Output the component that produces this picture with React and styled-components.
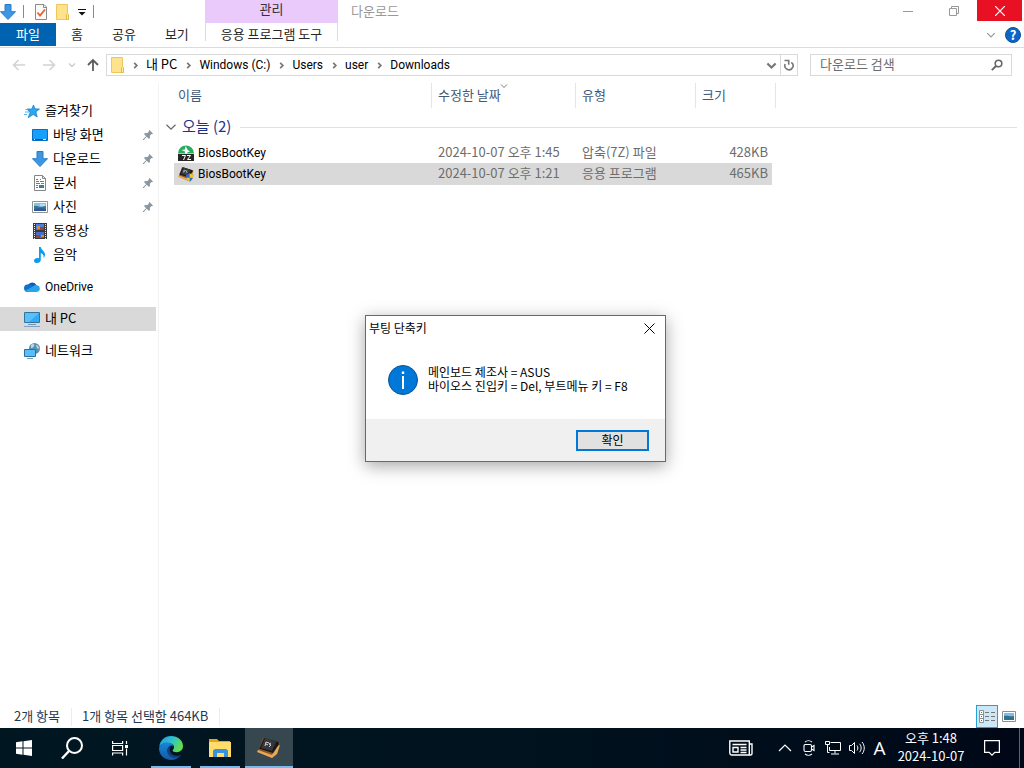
import React from 'react';
import styled, { createGlobalStyle } from 'styled-components';

const GlobalStyle = createGlobalStyle`
  *, *::before, *::after {
    box-sizing: border-box;
  }
  body {
    margin: 0;
    background: #fff;
    color: #000;
    font-family: 'Noto Sans CJK KR', 'Noto Sans', sans-serif;
    font-size: 13px;
    line-height: 16px;
  }
  button, input {
    font: inherit;
    color: inherit;
    border: 0;
    padding: 0;
    margin: 0;
    background: none;
  }
  a {
    color: inherit;
    text-decoration: none;
  }
  svg {
    display: block;
    flex: none;
  }
`;

const Desktop = styled.div`
  position: relative;
  display: flex;
  flex-direction: column;
  min-height: 100vh;
`;

const ExplorerWindow = styled.main`
  flex: 1;
  display: flex;
  flex-direction: column;
  background: #fff;
`;

const ItemText = styled.span`
  padding-bottom: 2px;
  ${({ $latin }) => $latin && "font-family: Roboto, 'Noto Sans', sans-serif; font-size: 12px; padding-bottom: 0;"}
`;

const isLatin = (text) => /^[\x20-\x7e]+$/.test(text);

/* icons */

const DownArrowIcon = ({ size = 16 }) => (
  <svg width={size} height={size} viewBox="0 0 16 16" aria-hidden="true">
    <path d="M5 .5h6v7.2h4.5L8 15.5.5 7.7H5z" fill="#3b97e3" stroke="#2c7cc4" />
  </svg>
);

const PropertiesIcon = () => (
  <svg width="12" height="16" viewBox="0 0 12 16" aria-hidden="true">
    <path d="M.5.5H9l2.5 2.5v12.5H.5z" fill="#fafafa" stroke="#8b8b8b" />
    <path d="M8.5.5V3.500h3" fill="none" stroke="#8b8b8b" />
    <path d="M2.500 8.500l2.500 3 5-6" fill="none" stroke="#e8622c" strokeWidth="1.800" />
  </svg>
);

const FolderIcon = () => (
  <svg width="13" height="16" viewBox="0 0 13 16" aria-hidden="true">
    <path d="M.5.5h11v9l1 1v5H.5z" fill="#ffe28c" stroke="#edc75a" />
    <path d="M10.500 15.500v-5l1-1 1 1v5z" fill="#ffe9a6" stroke="#e3b94a" />
  </svg>
);

const CustomizeIcon = () => (
  <svg width="8" height="8" viewBox="0 0 8 8" aria-hidden="true">
    <path d="M0 1.500h8" stroke="#111" />
    <path d="M.5 4h7L4 7.500z" fill="#111" />
  </svg>
);

const Chevron = ({ dir = 'right', size = 8, color = '#666', weight = 1.4 }) => {
  const d = {
    right: 'M2.500 1l3 3-3 3',
    down: 'M1 2.500l3 3 3-3',
    up: 'M1 5.500l3-3 3 3',
  }[dir];
  return (
    <svg width={size} height={size} viewBox="0 0 8 8" aria-hidden="true">
      <path d={d} fill="none" stroke={color} strokeWidth={weight} />
    </svg>
  );
};

const NavArrow = ({ dir, color }) => {
  const d = {
    left: 'M13 7H2M6.500 2L1.500 7l5 5',
    right: 'M1 7h11M7.500 2l5 5-5 5',
    up: 'M7 13V2M2 7l5-5 5 5',
  }[dir];
  return (
    <svg width="14" height="14" viewBox="0 0 14 14" aria-hidden="true">
      <path d={d} fill="none" stroke={color} strokeWidth={dir === 'up' ? 1.8 : 1.5} />
    </svg>
  );
};

const RefreshIcon = () => (
  <svg width="12" height="12" viewBox="0 0 12 12" aria-hidden="true">
    <path d="M8.300 3.300A4.100 4.100 0 1 1 2.200 5" fill="none" stroke="#777" strokeWidth="1.600" />
    <path d="M1.500 1.500h4.200v4.200" fill="none" stroke="#777" strokeWidth="1.600" />
  </svg>
);

const SearchIcon = () => (
  <svg width="12" height="12" viewBox="0 0 12 12" aria-hidden="true">
    <circle cx="7.500" cy="4.500" r="3.300" fill="none" stroke="#666" strokeWidth="1.600" />
    <path d="M5 7L.8 11.200" stroke="#666" strokeWidth="1.900" />
  </svg>
);

const StarIcon = () => (
  <svg width="16" height="16" viewBox="0 0 16 16" aria-hidden="true">
    <path
      d="M9.500 2l1.400 3.800 4.600.3-3.600 2.700 1.300 5.200-4-2.500-5 3.300 1.900-5.400L3 6h4.800z"
      fill="#2da5f0"
      stroke="#1584cc"
      strokeWidth=".8"
    />
    <path d="M1 9h4M0 11.500h3M1.500 6.500h2" stroke="#5bb8f2" />
  </svg>
);

const DesktopIcon = () => (
  <svg width="16" height="16" viewBox="0 0 16 16" aria-hidden="true">
    <path d="M.5 2.500h15v11H.5z" fill="#16a0fd" stroke="#0f6cbd" />
    <path d="M1 12.500h14" stroke="#0b4f94" />
    <path d="M2 12.500h1M11 12.500h3" stroke="#fff" />
  </svg>
);

const DocumentIcon = () => (
  <svg width="16" height="16" viewBox="0 0 16 16" aria-hidden="true">
    <path d="M2.500.5h8l3 3v12h-11z" fill="#fff" stroke="#868686" />
    <path d="M10.500.5v3h3" fill="none" stroke="#868686" />
    <path d="M4 4.500h2M8 4.500h1M4 6.500h3M8 6.500h4M4 8.500h4M9 8.500h3M4 10.500h2M4 12.500h2" stroke="#2b8fd6" />
    <path d="M7 10h5v3H7z" fill="#3a7f96" />
  </svg>
);

const PictureIcon = () => (
  <svg width="16" height="16" viewBox="0 0 16 16" aria-hidden="true">
    <path d="M.5 2.500h15v11H.5z" fill="#fff" stroke="#929292" />
    <path d="M2 4h12v8H2z" fill="#86c1ef" />
    <path d="M2 7c3-1 5 1 7 1s3-1 5-1v5H2z" fill="#397889" />
    <path d="M2 10c4-1 8-1 12 0v2H2z" fill="#2e579b" />
    <path d="M8 6h5" stroke="#e9f6ff" />
  </svg>
);

const VideoIcon = () => (
  <svg width="16" height="16" viewBox="0 0 16 16" aria-hidden="true">
    <path d="M1 0h14v16H1z" fill="#3a3a3a" />
    <path d="M2.500 1v15M13.500 1v15" stroke="#eee" strokeDasharray="1 1" />
    <path d="M4 1h8v6H4z" fill="#4e7ddb" />
    <path d="M4 9h8v6H4z" fill="#456fc9" />
    <path d="M5 3h3v3H5zM9 12h3v2H9z" fill="#dc8a2d" />
    <path d="M8 4h4v3H8zM4 12h4v3H4z" fill="#9b4141" />
  </svg>
);

const MusicIcon = () => (
  <svg width="16" height="16" viewBox="0 0 16 16" aria-hidden="true">
    <path
      d="M7 0h1.800c.2 3 4.200 4 4.200 7.500 0 1.500-.6 2.500-1.500 3.500.6-2.600-.6-4.400-2.700-4.800v6.500c0 2-1.700 3.300-3.800 3.300-1.700 0-3-.9-3-2.300C2 12 3.800 11 5.400 11c.6 0 1.100.1 1.600.3z"
      fill="#0c9bf3"
    />
  </svg>
);

const OneDriveIcon = () => (
  <svg width="16" height="16" viewBox="0 0 16 16" aria-hidden="true">
    <path d="M4 6a4.700 4.700 0 0 1 8.500.3L9 10z" fill="#0a5cb5" />
    <path d="M3.500 5.600c2-.6 4 0 5.500 1.500l2 4.400-7 1.500A3.700 3.700 0 0 1 3.500 5.600z" fill="#1270cd" />
    <path d="M9 7.500c1.200-1.500 3-1.700 4.200-1.200A3.400 3.400 0 0 1 12.800 13H3.600c-1 0-1.900-.5-2.500-1.200z" fill="#29a3ea" />
  </svg>
);

const PcIcon = () => (
  <svg width="16" height="16" viewBox="0 0 16 16" aria-hidden="true">
    <path d="M.5 1.500h15v10H.5z" fill="#58c1fc" stroke="#35739c" />
    <path d="M15 2v9H5z" fill="#34a9f5" />
    <path d="M4 13.500h8" stroke="#7695ad" />
    <path d="M0 15.500h16" stroke="#7ba3c6" />
  </svg>
);

const NetworkIcon = () => (
  <svg width="16" height="16" viewBox="0 0 16 16" aria-hidden="true">
    <circle cx="10.500" cy="5.500" r="5.500" fill="#5a91b0" />
    <path d="M7 2c2-2 4-1 3 1S7 5 7 5zM12 2c2 0 3 2 3 4l-2-1z" fill="#b9dbe8" />
    <path d="M.5 6.500h11v7H.5z" fill="#56c0fc" stroke="#2c6f9e" />
    <path d="M3 15.500h6" stroke="#7da0b8" />
  </svg>
);

const PinIcon = () => (
  <svg width="10" height="10" viewBox="0 0 10 10" aria-hidden="true">
    <path d="M6.500 0L10 3.500l-1 .7-.5-.2-1.700 1.800.2 2L6 9 3.800 6.700.8 10H0v-.8l3.200-3L1 4l1.200-1 2 .2L6 1.500l-.2-.6z" fill="#8a959d" />
  </svg>
);

const ArchiveIcon = () => (
  <svg width="16" height="16" viewBox="0 0 16 16" aria-hidden="true">
    <path d="M0 8.500a8 8 0 0 1 16 0z" fill="#29ab61" />
    <path d="M7.500 1l2 3.500 2.500 2.500H9.500V8.500H7V6.500L3.500 5l3.500-.5z" fill="#fff" />
    <path d="M0 9h16v7H0z" fill="#262626" />
    <path d="M4 10.500h3.500L5.500 15M9 10.500h3.500L9.500 14.500h3.500" fill="none" stroke="#fff" />
  </svg>
);

const KeyIcon = ({ size = 16, shield }) => (
  <svg width={size} height={size} viewBox="0 0 24 24" aria-hidden="true">
    <path d="M6 2l17 5-3 11-5 4L1 16l2-6z" fill="#8f5426" />
    <path d="M1 14l14 5 6-9 2-1-3 9-5 4L0 16z" fill="#e5a958" />
    <path d="M7 2l14 4c1 0 1 1 1 2l-6 9L3 13c-1 0-1-1 0-2z" fill="#17181b" />
    <path d="M8 2l11 4-4 9L4 12z" fill="#35373b" />
    <path d="M9 6l-1 4M9 6l3 1M9 8l2 1M14 7l-2 1 2 1-2 2" fill="none" stroke="#cfd1d4" />
    {shield && (
      <>
        <path d="M12 13c2 0 4-1 5.500-2 1.500 1 3 2 5.500 2 0 5-2 8-5.500 10.500C14 21 12 18 12 13z" fill="#2172c8" />
        <path d="M17.500 11c2 1 3 2 5.500 2v4.500h-5.500zM12.500 17.500h5v6C14.500 21.500 13 20 12.500 17.500z" fill="#ffc42b" />
      </>
    )}
  </svg>
);

const InfoIcon = () => (
  <svg width="30" height="30" viewBox="0 0 30 30" aria-hidden="true">
    <circle cx="15" cy="15" r="14.500" fill="#0078d7" stroke="#0a5296" />
    <path d="M15 11V24" stroke="#fff" strokeWidth="2" />
    <path d="M15 6.500V9" stroke="#fff" strokeWidth="2.400" />
  </svg>
);

/* title bar and ribbon */

const TitleBar = styled.header`
  display: flex;
  height: 23px;
`;

const QuickAccess = styled.div`
  display: flex;
  align-items: center;
  gap: 9px;
  flex: 0 0 205px;
`;

const QuickButton = styled.button`
  display: flex;
`;

const QuickDivider = styled.span`
  width: 1px;
  height: 13px;
  margin: 0 2px 0 -2px;
  background: #8a8a8a;
`;

const ContextLabel = styled.div`
  flex: 0 0 133px;
  padding-top: 1px;
  background: #eac9fb;
  color: #333;
  text-align: center;
`;

const WindowTitle = styled.div`
  flex: 1;
  padding: 3px 13px;
  color: #999;
`;

const WindowButtons = styled.div`
  display: flex;
  gap: 1px;
  margin-right: 2px;
`;

const WindowButton = styled.button`
  display: flex;
  align-items: center;
  justify-content: center;
  width: 45px;
  height: 21px;
  background: ${({ $close }) => ($close ? '#e81123' : 'transparent')};
`;

const Ribbon = styled.nav`
  display: flex;
  height: 25px;
  border-bottom: 1px solid #dadbdc;
`;

const RibbonTabs = styled.div`
  display: flex;
  gap: 1px;
  flex: 0 0 205px;
`;

const RibbonTab = styled.button`
  height: 23px;
  padding: 0 14px 1px;
  color: #262626;
`;

const FileTab = styled(RibbonTab)`
  width: 56px;
  background: #0063b1;
  color: #fff;
`;

const ContextTab = styled(RibbonTab)`
  flex: 0 0 133px;
  padding: 0 0 1px;
  border: solid #dcdcdc;
  border-width: 0 1px;
  height: 18px;
  line-height: 22px;
`;

const RibbonEnd = styled.div`
  display: flex;
  align-items: center;
  gap: 9px;
  margin-left: auto;
  padding-right: 3px;
`;

const HelpButton = styled.button`
  width: 16px;
  height: 16px;
  border: 1px solid #14508c;
  border-radius: 50%;
  background: #0a66c8;
  color: #fff;
  font-weight: 700;
  line-height: 12px;
`;

const TopBars = () => (
  <>
    <TitleBar>
      <QuickAccess>
        <DownArrowIcon />
        <QuickDivider />
        <QuickButton aria-label="속성"><PropertiesIcon /></QuickButton>
        <QuickButton aria-label="새 폴더"><FolderIcon /></QuickButton>
        <QuickButton aria-label="사용자 지정"><CustomizeIcon /></QuickButton>
        <QuickDivider />
      </QuickAccess>
      <ContextLabel>관리</ContextLabel>
      <WindowTitle>다운로드</WindowTitle>
      <WindowButtons>
        <WindowButton aria-label="최소화">
          <svg width="10" height="10"><path d="M0 5.500h10" stroke="#999" /></svg>
        </WindowButton>
        <WindowButton aria-label="이전 크기로">
          <svg width="10" height="10" fill="none" stroke="#999">
            <path d="M.5 2.500h7v7h-7zM2.500 2.500v-2h7v7h-2" />
          </svg>
        </WindowButton>
        <WindowButton $close aria-label="닫기">
          <svg width="10" height="10"><path d="M0 0l10 10M10 0L0 10" stroke="#fff" strokeWidth="1.200" /></svg>
        </WindowButton>
      </WindowButtons>
    </TitleBar>
    <Ribbon>
      <RibbonTabs>
        <FileTab>파일</FileTab>
        <RibbonTab>홈</RibbonTab>
        <RibbonTab>공유</RibbonTab>
        <RibbonTab>보기</RibbonTab>
      </RibbonTabs>
      <ContextTab>응용 프로그램 도구</ContextTab>
      <RibbonEnd>
        <QuickButton aria-label="리본 확장">
          <Chevron dir="down" size={10} color="#999" weight={1} />
        </QuickButton>
        <HelpButton aria-label="도움말">?</HelpButton>
      </RibbonEnd>
    </Ribbon>
  </>
);

/* address bar */

const AddressRow = styled.div`
  display: flex;
  align-items: center;
  height: 35px;
  padding: 0 12px 1px 4px;
`;

const NavButton = styled.button`
  display: flex;
  justify-content: center;
  width: ${({ $width }) => $width || 30}px;
`;

const AddressBox = styled.div`
  flex: 1;
  display: flex;
  height: 22px;
  border: 1px solid #d9d9d9;
`;

const Crumbs = styled.div`
  flex: 1;
  display: flex;
  align-items: center;
  padding-left: 4px;
`;

const CrumbArrow = styled.span`
  display: flex;
  justify-content: center;
  width: 22px;
`;

const AddressButton = styled.button`
  display: flex;
  align-items: center;
  justify-content: center;
  width: 17px;
  border-left: ${({ $divided }) => ($divided ? '1px solid #d9d9d9' : '0')};
`;

const SearchBox = styled.label`
  display: flex;
  align-items: center;
  flex: 0 0 202px;
  height: 22px;
  margin-left: 12px;
  padding: 0 8px 0 9px;
  border: 1px solid #d9d9d9;
`;

const SearchInput = styled.input`
  flex: 1;
  min-width: 0;
  height: 20px;
  padding-bottom: 3px;
  outline: 0;
  &::placeholder {
    color: #6d6d6d;
    opacity: 1;
  }
`;

const crumbs = ['내 PC', 'Windows (C:)', 'Users', 'user', 'Downloads'];

const AddressBar = () => (
  <AddressRow>
    <NavButton aria-label="뒤로"><NavArrow dir="left" color="#d2d2d2" /></NavButton>
    <NavButton aria-label="앞으로"><NavArrow dir="right" color="#d2d2d2" /></NavButton>
    <NavButton $width={16} aria-label="최근 위치"><Chevron dir="down" color="#ccc" /></NavButton>
    <NavButton $width={26} aria-label="위로"><NavArrow dir="up" color="#5c5c5c" /></NavButton>
    <AddressBox>
      <Crumbs>
        <FolderIcon />
        {crumbs.map((name) => (
          <React.Fragment key={name}>
            <CrumbArrow><Chevron size={7} weight={2} color="#777" /></CrumbArrow>
            <ItemText as="a" href="#path" $latin={isLatin(name)}>{name}</ItemText>
          </React.Fragment>
        ))}
      </Crumbs>
      <AddressButton aria-label="이전 위치"><Chevron dir="down" size={11} color="#777" weight={1.6} /></AddressButton>
      <AddressButton $divided aria-label="새로 고침"><RefreshIcon /></AddressButton>
    </AddressBox>
    <SearchBox>
      <SearchInput type="text" placeholder="다운로드 검색" aria-label="다운로드 검색" />
      <SearchIcon />
    </SearchBox>
  </AddressRow>
);

/* navigation pane */

const Content = styled.div`
  flex: 1;
  display: flex;
`;

const Sidebar = styled.nav`
  display: flex;
  flex-direction: column;
  gap: 8px;
  flex: 0 0 159px;
  padding: 16px 2px 0 0;
  border-right: 1px solid #f3f3f3;
`;

const SidebarGroup = styled.div`
  display: flex;
  flex-direction: column;
`;

const SidebarItem = styled.a`
  display: flex;
  align-items: center;
  gap: 5px;
  height: 24px;
  padding: 0 3px 0 ${({ $child }) => ($child ? 32 : 24)}px;
  background: ${({ $selected }) => ($selected ? '#d9d9d9' : 'transparent')};
`;

const SidebarLabel = styled(ItemText)`
  flex: 1;
`;

const sidebarGroups = [
  [
    { name: '즐겨찾기', icon: <StarIcon /> },
    { name: '바탕 화면', icon: <DesktopIcon />, child: true, pinned: true },
    { name: '다운로드', icon: <DownArrowIcon />, child: true, pinned: true },
    { name: '문서', icon: <DocumentIcon />, child: true, pinned: true },
    { name: '사진', icon: <PictureIcon />, child: true, pinned: true },
    { name: '동영상', icon: <VideoIcon />, child: true },
    { name: '음악', icon: <MusicIcon />, child: true },
  ],
  [{ name: 'OneDrive', icon: <OneDriveIcon /> }],
  [{ name: '내 PC', icon: <PcIcon />, selected: true }],
  [{ name: '네트워크', icon: <NetworkIcon /> }],
];

const NavigationPane = () => (
  <Sidebar>
    {sidebarGroups.map((group) => (
      <SidebarGroup key={group[0].name}>
        {group.map((item) => (
          <SidebarItem
            key={item.name}
            href="#place"
            $child={item.child}
            $selected={item.selected}
          >
            {item.icon}
            <SidebarLabel $latin={isLatin(item.name)}>{item.name}</SidebarLabel>
            {item.pinned && <PinIcon />}
          </SidebarItem>
        ))}
      </SidebarGroup>
    ))}
  </Sidebar>
);

/* file list */

const FilePane = styled.section`
  flex: 1;
  padding: 0 7px 0 6px;
`;

const FileTable = styled.table`
  width: 100%;
  table-layout: fixed;
  border-collapse: separate;
  border-spacing: 0;
`;

const HeadCell = styled.th`
  position: relative;
  height: 25px;
  padding: 0 0 2px ${({ $first }) => ($first ? 4 : 6)}px;
  border-right: 1px solid #e5e5e5;
  color: #43597a;
  font-weight: 400;
  text-align: left;
`;

const SortMark = styled.span`
  position: absolute;
  top: -1px;
  left: 68px;
`;

const GroupCell = styled.td`
  height: 34px;
  padding: 4px 0 0;
`;

const GroupHeader = styled.div`
  display: flex;
  align-items: center;
  gap: 5px;
  color: #1e3287;
  font-size: 15px;
`;

const GroupName = styled.span`
  padding-bottom: 2px;
`;

const GroupLine = styled.span`
  flex: 1;
  height: 1px;
  margin-left: 4px;
  background: #e2e2e2;
`;

const FileRow = styled.tr`
  td:not(:first-child):not(:last-child) {
    background: ${({ $selected }) => ($selected ? '#d9d9d9' : 'transparent')};
  }
`;

const FileCell = styled.td`
  height: ${({ $selected }) => ($selected ? 22 : 21)}px;
  padding: 0 4px 2px 6px;
  color: #6d6d6d;
  text-align: ${({ $right }) => ($right ? 'right' : 'left')};
`;

const NameCell = styled(FileCell)`
  padding: 0 0 0 4px;
  color: #000;
`;

const FileName = styled.span`
  display: flex;
  align-items: center;
  gap: 4px;
`;

const files = [
  {
    id: 1,
    name: 'BiosBootKey',
    icon: <ArchiveIcon />,
    date: '2024-10-07 오후 1:45',
    type: '압축(7Z) 파일',
    size: '428KB',
  },
  {
    id: 2,
    name: 'BiosBootKey',
    icon: <KeyIcon shield />,
    date: '2024-10-07 오후 1:21',
    type: '응용 프로그램',
    size: '465KB',
    selected: true,
  },
];

const FileList = () => (
  <FilePane>
    <FileTable>
      <colgroup>
        <col width="9" />
        <col width="258" />
        <col width="144" />
        <col width="120" />
        <col width="76" />
        <col width="4" />
        <col />
      </colgroup>
      <thead>
        <tr>
          <td />
          <HeadCell $first>이름</HeadCell>
          <HeadCell>
            수정한 날짜
            <SortMark><Chevron dir="down" color="#777" weight={1} /></SortMark>
          </HeadCell>
          <HeadCell>유형</HeadCell>
          <HeadCell colSpan={2}>크기</HeadCell>
          <td />
        </tr>
      </thead>
      <tbody>
        <tr>
          <GroupCell colSpan={7}>
            <GroupHeader>
              <QuickButton aria-label="그룹 축소">
                <Chevron dir="down" size={12} weight={0.8} />
              </QuickButton>
              <GroupName>오늘 (2)</GroupName>
              <GroupLine />
            </GroupHeader>
          </GroupCell>
        </tr>
        {files.map((file) => (
          <FileRow key={file.id} $selected={file.selected}>
            <td />
            <NameCell $selected={file.selected}>
              <FileName>
                {file.icon}
                <ItemText $latin>{file.name}</ItemText>
              </FileName>
            </NameCell>
            <FileCell>{file.date}</FileCell>
            <FileCell>{file.type}</FileCell>
            <FileCell $right>{file.size}</FileCell>
            <td colSpan={2} />
          </FileRow>
        ))}
      </tbody>
    </FileTable>
  </FilePane>
);

/* status bar */

const StatusRow = styled.footer`
  display: flex;
  align-items: center;
  height: 23px;
  padding: 0 4px 0 14px;
  color: #1e3955;
`;

const StatusText = styled.span`
  padding: 0 11px 2px 0;
  margin-right: 10px;
  border-right: 1px solid #ececec;
`;

const ViewButton = styled.button`
  display: flex;
  align-items: center;
  justify-content: center;
  width: 22px;
  height: 23px;
  margin-left: ${({ $active }) => ($active ? 'auto' : '0')};
  border: ${({ $active }) => ($active ? '1px solid #26a0da' : '0')};
  background: ${({ $active }) => ($active ? '#cce8f6' : 'transparent')};
`;

const StatusBar = () => (
  <StatusRow>
    <StatusText>2개 항목</StatusText>
    <StatusText>1개 항목 선택함 464KB</StatusText>
    <ViewButton $active aria-label="자세히">
      <svg width="16" height="14" viewBox="0 0 16 14" fill="none">
        <path d="M.5.5h4v12h-4zM.5 4.500h4M.5 8.500h4" fill="#fff" stroke="#8f8f8f" />
        <path d="M2 2.500h1M2 6.500h1" stroke="#3379c4" />
        <path d="M2 10.500h1" stroke="#d03333" />
        <path d="M6 2.500h4M12 2.500h4M6 6.500h4M12 6.500h4M6 10.500h4M12 10.500h4" stroke="#777" />
      </svg>
    </ViewButton>
    <ViewButton aria-label="큰 아이콘">
      <svg width="14" height="11" viewBox="0 0 14 11">
        <path d="M.5.5h13v10H.5z" fill="#fff" stroke="#8f8f8f" />
        <path d="M2 2h10v7H2z" fill="#7cbcf0" />
        <path d="M2 5c3-1 6 1 10 0v4H2z" fill="#356f86" />
      </svg>
    </ViewButton>
  </StatusRow>
);

/* message box */

const MessageBox = styled.div`
  position: absolute;
  left: 365px;
  top: 315px;
  width: 301px;
  border: 1px solid #696969;
  background: #fff;
  box-shadow: 0 4px 16px rgba(0, 0, 0, 0.35);
  font-size: 12px;
  line-height: 14px;
`;

const MessageTitle = styled.div`
  display: flex;
  align-items: center;
  justify-content: space-between;
  height: 24px;
  padding: 0 10px 0 3px;
`;

const MessageBody = styled.div`
  display: flex;
  align-items: center;
  gap: 10px;
  height: 79px;
  padding: 0 22px;
  white-space: nowrap;
`;

const MessageText = styled.p`
  margin: 0;
  padding-bottom: 2px;
`;

const MessageFooter = styled.div`
  display: flex;
  justify-content: flex-end;
  padding: 11px 16px 10px;
  background: #f0f0f0;
`;

const OkButton = styled.button`
  width: 73px;
  height: 21px;
  padding-bottom: 2px;
  border: 2px solid #0078d7;
  background: #e1e1e1;
`;

const Message = () => (
  <MessageBox role="dialog" aria-label="부팅 단축키">
    <MessageTitle>
      <span>부팅 단축키</span>
      <QuickButton aria-label="닫기">
        <svg width="11" height="11"><path d="M.5.5l10 10M10.500.5l-10 10" stroke="#000" /></svg>
      </QuickButton>
    </MessageTitle>
    <MessageBody>
      <InfoIcon />
      <div>
        <MessageText>
          메인보드 제조사 = ASUS
          <br />
          바이오스 진입키 = Del, 부트메뉴 키 = F8
        </MessageText>
      </div>
    </MessageBody>
    <MessageFooter>
      <OkButton>확인</OkButton>
    </MessageFooter>
  </MessageBox>
);

/* taskbar */

const TaskbarRow = styled.footer`
  display: flex;
  height: 40px;
  background: linear-gradient(90deg, #001722, #00131f 50%, #000818);
  color: #fff;
`;

const TaskButton = styled.button`
  display: flex;
  align-items: center;
  justify-content: center;
  width: 48px;
`;

const Apps = styled.div`
  display: flex;
  gap: 1px;
  margin-left: 3px;
`;

const AppButton = styled(TaskButton)`
  position: relative;
  background: ${({ $active }) => ($active ? '#37474f' : 'transparent')};
  &::after {
    content: '';
    position: absolute;
    bottom: 0;
    left: ${({ $active }) => ($active ? 0 : 4)}px;
    right: ${({ $active }) => ($active ? 0 : 4)}px;
    height: 2px;
    background: #76b9ed;
  }
`;

const Tray = styled.div`
  display: flex;
  margin-left: auto;
`;

const TrayButton = styled.button`
  display: flex;
  align-items: center;
  justify-content: center;
  width: ${({ $width }) => $width || 24}px;
`;

const InputMode = styled(TrayButton)`
  padding-right: 3px;
  font-family: 'Open Sans', sans-serif;
  font-size: 19px;
`;

const Clock = styled.button`
  width: 76px;
  padding-bottom: 2px;
  line-height: 18px;
`;

const ShowDesktop = styled.button`
  width: 5px;
  margin-left: 4px;
  border-left: 1px solid #5d646d;
`;

const EdgeIcon = () => (
  <svg width="24" height="24" viewBox="0 0 24 24" aria-hidden="true">
    <defs>
      <linearGradient id="edgeTop" x1="0" y1="0" x2="1" y2="0.400">
        <stop offset="0" stopColor="#2793dd" />
        <stop offset=".55" stopColor="#2fc1ce" />
        <stop offset="1" stopColor="#61dc51" />
      </linearGradient>
      <linearGradient id="edgeLow" x1="0" y1="0" x2="0" y2="1">
        <stop offset="0" stopColor="#1787d4" />
        <stop offset="1" stopColor="#1459a8" />
      </linearGradient>
    </defs>
    <path d="M.2 11C1 4.500 5.500 0 12 0c7 0 12 4.500 12 10 0 4-3 6.200-6.300 6.200-2.500 0-4-.8-4-1.700 0-.8 1.300-1.300 1.300-3.300 0-2.300-2.300-4.200-6-4.200C4.500 7 1 8.800.2 11z" fill="url(#edgeTop)" />
    <path d="M.1 12C.8 8.500 4 6.500 8 6.500c3.500 0 6 1.500 6.800 3.600-2.600-1.700-6.100 0-6.100 4 0 4.500 4.500 7.900 9.200 6.800 1.500-.3 2.600-1 3.500-1.500C19.500 22 16 24 12 24 5 24-.4 18.500.1 12z" fill="url(#edgeLow)" />
    <path d="M10.500 10.300c-3 1.500-3.200 6.200-.4 9.200 3 3.300 8.200 3 11.700.1.300-.3 0-.8-.4-.6-4.700 2.100-9.400.1-10.500-4-.4-1.700 0-3.500 1.400-4.900z" fill="#123f7e" />
  </svg>
);

const ExplorerIcon = () => (
  <svg width="22" height="18" viewBox="0 0 22 18" aria-hidden="true">
    <path d="M0 0h8l2 2h11v6H0z" fill="#e8a317" />
    <path d="M0 3h22v15H0z" fill="#ffdc6b" />
    <path d="M4 18v-6.500L6 10h11l2 1.500V18H15v-4H8v4z" fill="#3993db" />
  </svg>
);

const Taskbar = () => (
  <TaskbarRow>
    <TaskButton aria-label="시작">
      <svg width="16" height="16" viewBox="0 0 16 16" fill="#fff">
        <path d="M0 2.200l6.500-.9v6.200H0zM7.500 1.200L16 0v7.500H7.500zM0 8.500h6.500v6.200L0 13.800zM7.500 8.500H16V16l-8.500-1.200z" />
      </svg>
    </TaskButton>
    <TaskButton aria-label="검색">
      <svg width="22" height="22" viewBox="0 0 22 22" fill="none" stroke="#fff" strokeWidth="2">
        <circle cx="13.500" cy="8.500" r="7.500" />
        <path d="M8 14l-7 7.500" strokeWidth="2.400" />
      </svg>
    </TaskButton>
    <TaskButton aria-label="작업 보기">
      <svg width="16" height="16" viewBox="0 0 16 16" fill="none" stroke="#fff" strokeWidth="1.200">
        <path d="M.6 1v2.500h10V1M.6 15.500V13h10v2.500M.6 5.500h10v5H.6zM14.500 1v3M14.500 8.500v7" />
        <path d="M13 5h3v3h-3z" fill="#fff" stroke="none" />
      </svg>
    </TaskButton>
    <Apps>
      <AppButton aria-label="Microsoft Edge"><EdgeIcon /></AppButton>
      <AppButton aria-label="파일 탐색기"><ExplorerIcon /></AppButton>
      <AppButton $active aria-label="BiosBootKey"><KeyIcon size={24} /></AppButton>
    </Apps>
    <Tray>
      <TrayButton $width={64} aria-label="뉴스">
        <svg width="24" height="16" viewBox="0 0 24 16" fill="none" stroke="#fff" strokeWidth="1.400">
          <path d="M.8 1h19.500v14H3a2 2 0 0 1-2.200-2zM20.500 4H23v9.500c0 1-.8 1.500-1.500 1.500H19M3.500 4.500h14M11.500 7.500h6M11.500 10h6M11.500 12.500h6M4 7.500h5v4.500H4z" />
        </svg>
      </TrayButton>
      <TrayButton aria-label="숨겨진 아이콘 표시">
        <Chevron dir="up" size={16} color="#fff" weight={0.6} />
      </TrayButton>
      <TrayButton aria-label="지금 모임 시작">
        <svg width="12" height="16" viewBox="0 0 12 16" fill="none" stroke="#fff" strokeWidth="1.100">
          <path d="M1 5.500A1.500 1.500 0 0 1 2.500 4.500H7a1.500 1.500 0 0 1 1.500 1.500v4A1.500 1.500 0 0 1 7 11.500H2.500A1.500 1.500 0 0 1 1 10zM8.500 7l2.500-1.500v5L8.500 9M2 2.200C4 .3 7 .3 9 2.200M2 13.800c2 1.900 5 1.900 7 0" />
        </svg>
      </TrayButton>
      <TrayButton aria-label="네트워크">
        <svg width="16" height="14" viewBox="0 0 16 14" fill="none" stroke="#fff">
          <path d="M5.500 1.500h10v8h-11V6M10 9.500v3M6 13h8M.5.500h4v3h-4zM2.500 3.500v8h2" />
        </svg>
      </TrayButton>
      <TrayButton aria-label="볼륨">
        <svg width="16" height="14" viewBox="0 0 16 14" fill="none" stroke="#fff">
          <path d="M.5 4.500h2L5.500 1.500v11l-3-3h-2zM8 4.500c1.200 1.500 1.200 3.500 0 5M10.500 2.800c2.200 2.500 2.200 5.900 0 8.400M13 1c3 3.500 3 8.500 0 12" />
        </svg>
      </TrayButton>
      <InputMode>A</InputMode>
      <Clock>
        오후 1:48
        <br />
        2024-10-07
      </Clock>
      <TrayButton $width={46} aria-label="알림">
        <svg width="16" height="16" viewBox="0 0 16 16" fill="none" stroke="#fff" strokeWidth="1.200">
          <path d="M.6.6h14.800v11.800h-4.600L8 15.200l-2.800-2.800H.6z" />
        </svg>
      </TrayButton>
      <ShowDesktop aria-label="바탕 화면 보기" />
    </Tray>
  </TaskbarRow>
);

const App = () => (
  <>
    <GlobalStyle />
    <Desktop>
      <ExplorerWindow>
        <TopBars />
        <AddressBar />
        <Content>
          <NavigationPane />
          <FileList />
        </Content>
        <StatusBar />
      </ExplorerWindow>
      <Message />
      <Taskbar />
    </Desktop>
  </>
);

export default App;
